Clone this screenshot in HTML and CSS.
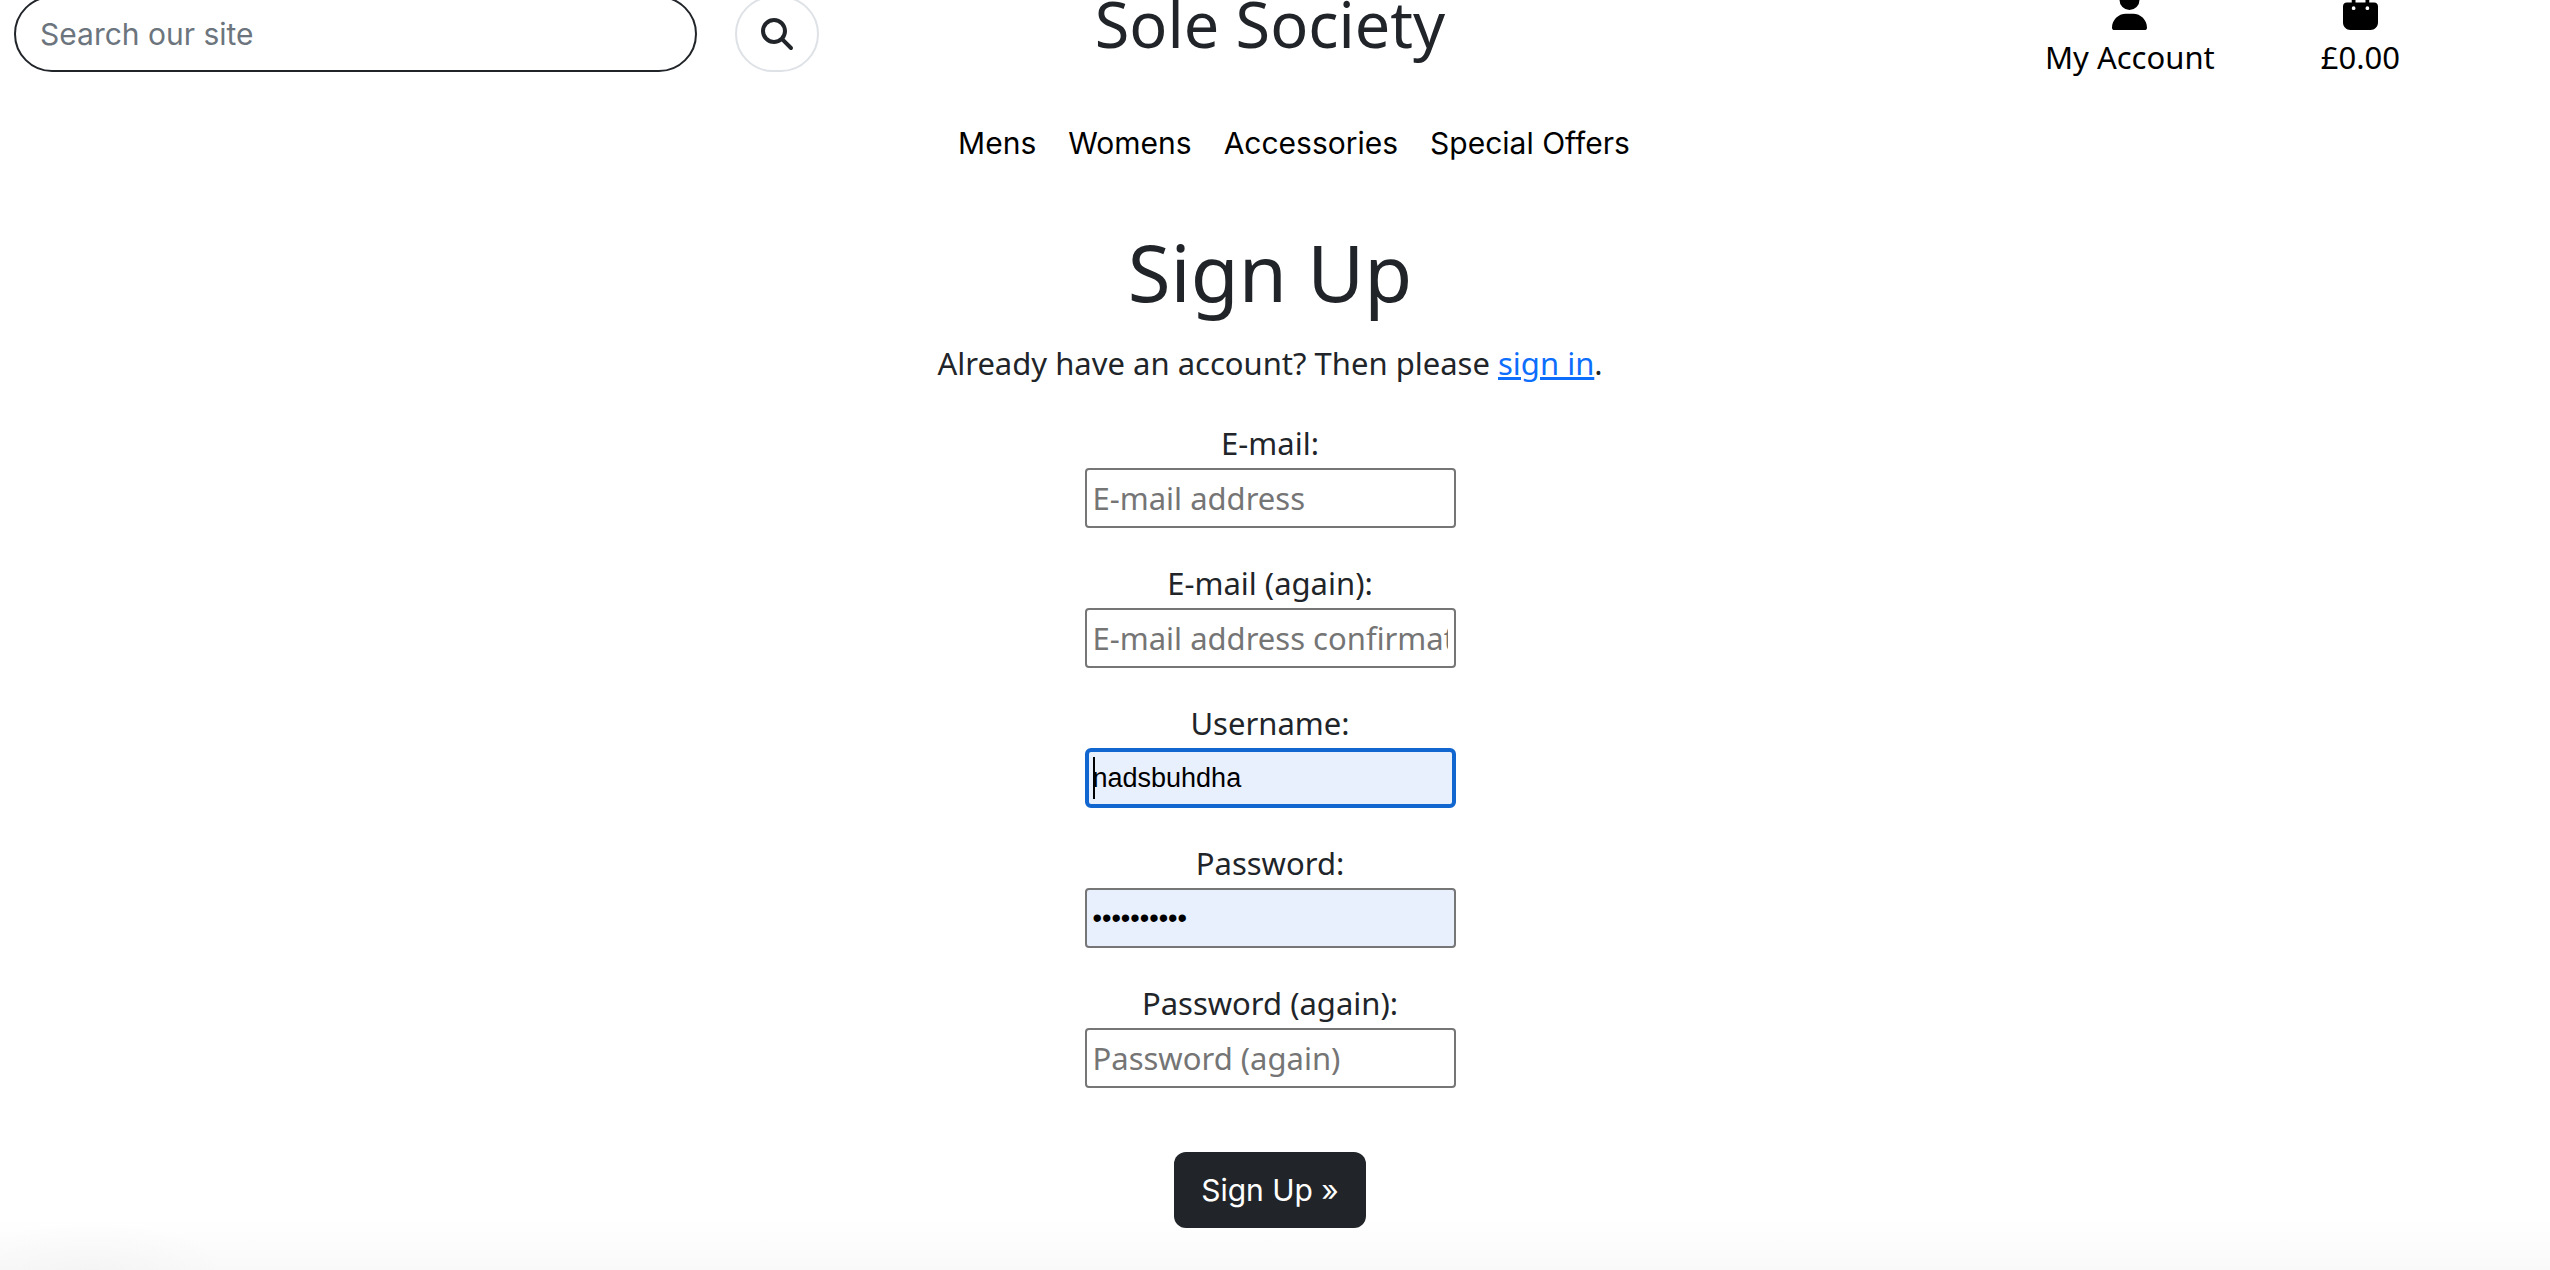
FILE: index.html
```html
<!DOCTYPE html>
<html lang="en">
<head>
<meta charset="utf-8">
<meta name="viewport" content="width=device-width, initial-scale=1">
<title>Sole Society</title>
<link rel="stylesheet" href="styles.css">
</head>
<body>
<header class="site-header">
  <form class="search">
    <input class="search-input" type="search" placeholder="Search our site" aria-label="Search our site">
    <button class="search-button" type="submit" aria-label="Search">
      <svg class="search-icon" viewBox="0 0 512 512" aria-hidden="true"><path d="M416 208c0 45.900-14.900 88.300-40 122.700L502.600 457.400c12.500 12.500 12.500 32.800 0 45.300s-32.800 12.500-45.300 0L330.700 376c-34.400 25.200-76.800 40-122.700 40C93.100 416 0 322.900 0 208S93.100 0 208 0S416 93.100 416 208zM208 352a144 144 0 1 0 0-288 144 144 0 1 0 0 288z"/></svg>
    </button>
  </form>
  <a class="brand" href="#">Sole Society</a>
  <div class="tools">
    <a class="tool" href="#">
      <svg class="tool-icon" viewBox="0 0 448 512" aria-hidden="true"><path d="M224 256A128 128 0 1 0 224 0a128 128 0 1 0 0 256zm-45.700 48C79.800 304 0 383.800 0 482.300C0 498.700 13.300 512 29.700 512H418.300c16.400 0 29.700-13.300 29.700-29.700C448 383.800 368.200 304 269.700 304H178.300z"/></svg>
      <span>My Account</span>
    </a>
    <a class="tool" href="#">
      <svg class="tool-icon" viewBox="0 0 448 512" aria-hidden="true"><path d="M160 112c0-35.300 28.700-64 64-64s64 28.700 64 64v48H160V112zm-48 48H48c-26.500 0-48 21.500-48 48V416c0 53 43 96 96 96H352c53 0 96-43 96-96V208c0-26.500-21.500-48-48-48H336V112C336 50.100 285.900 0 224 0S112 50.100 112 112v48zm24 48a24 24 0 1 1 0 48 24 24 0 1 1 0-48zm152 24a24 24 0 1 1 48 0 24 24 0 1 1 -48 0z"/></svg>
      <span>£0.00</span>
    </a>
  </div>
</header>
<nav class="main-nav">
  <a href="#">Mens</a>
  <a href="#">Womens</a>
  <a href="#">Accessories</a>
  <a href="#">Special Offers</a>
</nav>
<main class="signup">
  <h1>Sign Up</h1>
  <p class="lead">Already have an account? Then please <a href="#">sign in</a>.</p>
  <form class="signup-form">
    <div class="field">
      <label for="email">E-mail:</label>
      <input id="email" type="email" placeholder="E-mail address">
    </div>
    <div class="field">
      <label for="email2">E-mail (again):</label>
      <input id="email2" type="email" placeholder="E-mail address confirmation">
    </div>
    <div class="field">
      <label for="username">Username:</label>
      <input id="username" class="filled active" type="text" value="nadsbuhdha">
    </div>
    <div class="field">
      <label for="password">Password:</label>
      <input id="password" class="filled" type="password" value="abcdefghij">
    </div>
    <div class="field">
      <label for="password2">Password (again):</label>
      <input id="password2" type="password" placeholder="Password (again)">
    </div>
    <button class="submit" type="submit">Sign Up »</button>
  </form>
</main>
</body>
</html>
```
FILE: styles.css
```css
* {
  box-sizing: border-box;
}

body {
  margin: 0;
  padding-right: 10px;
  min-height: 100vh;
  color: #212529;
  background:
    radial-gradient(140px 50px at 90px 100%, rgba(0, 0, 0, 0.02), transparent),
    linear-gradient(to top, #f9f9f9, #fff 50px);
  font-family: "Noto Sans", sans-serif;
  font-size: 31px;
  line-height: 46px;
}

.site-header {
  display: grid;
  grid-template-columns: repeat(3, 1fr);
  align-items: start;
  margin-top: -10px;
}

.search {
  display: flex;
  gap: 38px;
  padding: 6px 28px 0 14px;
}

.search-input {
  flex: 1;
  min-width: 0;
  height: 76px;
  padding: 0 24px;
  border: 2px solid #212529;
  border-radius: 38px;
  background: #fff;
  font-family: Inter, sans-serif;
  font-size: 30px;
  appearance: none;
}

.search-input::placeholder {
  color: #6c757d;
  opacity: 1;
}

.search-button {
  display: flex;
  align-items: center;
  justify-content: center;
  width: 84px;
  height: 76px;
  padding: 0;
  border: 2px solid #dee2e6;
  border-radius: 38px;
  background: #fff;
}

.search-icon {
  width: 32px;
  height: 32px;
  fill: #212529;
}

.brand {
  color: #212529;
  font-size: 63px;
  line-height: 68px;
  text-align: center;
  text-decoration: none;
}

.tools {
  display: flex;
  justify-content: flex-end;
  gap: 106px;
  padding-right: 140px;
}

.tool {
  display: flex;
  flex-direction: column;
  align-items: center;
  gap: 4px;
  color: #000;
  text-decoration: none;
}

.tool-icon {
  width: 35px;
  height: 40px;
}

.main-nav {
  display: flex;
  justify-content: center;
  gap: 32px;
  padding: 40px 0 0 48px;
  font-family: Inter, sans-serif;
  font-size: 30px;
}

.main-nav a {
  color: #000;
  text-decoration: none;
}

.signup {
  text-align: center;
}

h1 {
  margin: 58px 0 20px;
  font-size: 78px;
  font-weight: 400;
  line-height: 96px;
}

.lead {
  margin: 0 0 34px;
}

.lead a {
  color: #0d6efd;
}

.signup-form {
  display: flex;
  flex-direction: column;
  align-items: center;
}

.field {
  display: flex;
  flex-direction: column;
  align-items: center;
  gap: 2px;
  margin-bottom: 32px;
}

.field input {
  width: 371px;
  height: 60px;
  padding: 0 6px;
  border: 2px solid #767676;
  border-radius: 4px;
  background: #fff;
  color: #000;
  font-family: "Noto Sans", sans-serif;
  font-size: 31px;
  outline: none;
}

.field input::placeholder {
  color: #757575;
}

.field .filled {
  background: #e8f0fe;
  font-family: "Liberation Sans", sans-serif;
  font-size: 27px;
}

/* Focused look, with the text cursor at the start of the value */
.field .active {
  padding: 0 4px;
  border: 4px solid #1266cf;
  border-radius: 6px;
  background: linear-gradient(#000, #000) 4px center / 2px 42px no-repeat #e8f0fe;
}

.submit {
  height: 76px;
  margin-top: 32px;
  padding: 0 27px;
  border: 0;
  border-radius: 12px;
  background: #212529;
  color: #fff;
  font-family: Inter, sans-serif;
  font-size: 30px;
}
```
